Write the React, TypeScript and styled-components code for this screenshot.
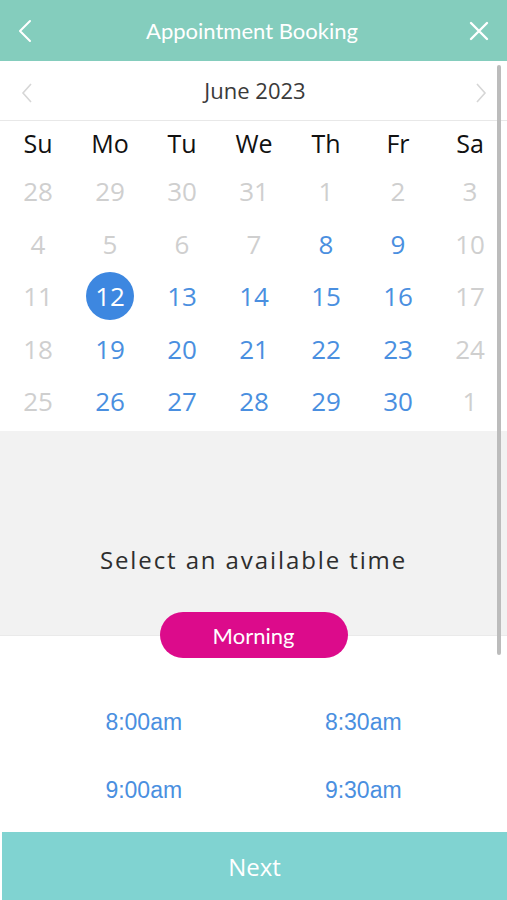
import React from "react";
import styled, { createGlobalStyle } from "styled-components";

const GlobalStyle = createGlobalStyle`
  html, body {
    margin: 0;
    padding: 0;
    background: #fff;
  }
  * {
    box-sizing: border-box;
  }
`;

type Day = {
  label: number;
  active?: boolean;
  selected?: boolean;
};

const weekDays = ["Su", "Mo", "Tu", "We", "Th", "Fr", "Sa"];

// 6월 달력, 앞뒤 달의 날짜는 비활성
const weeks: Day[][] = [
  [28, 29, 30, 31, 1, 2, 3].map((n) => ({ label: n })),
  [4, 5, 6, 7].map((n) => ({ label: n } as Day)).concat(
    [8, 9].map((n) => ({ label: n, active: true })),
    [{ label: 10 }]
  ),
  [
    { label: 11 },
    { label: 12, active: true, selected: true },
    ...[13, 14, 15, 16].map((n) => ({ label: n, active: true })),
    { label: 17 },
  ],
  [
    { label: 18 },
    ...[19, 20, 21, 22, 23].map((n) => ({ label: n, active: true })),
    { label: 24 },
  ],
  [
    { label: 25 },
    ...[26, 27, 28, 29, 30].map((n) => ({ label: n, active: true })),
    { label: 1 },
  ],
];

const times = ["8:00am", "8:30am", "9:00am", "9:30am"];

const App = () => {
  return (
    <>
      <GlobalStyle />
      <Page>
        <Header>
          <HeaderIcon>
            <svg width="14" height="24" viewBox="0 0 14 24">
              <polyline
                points="12,2 2,12 12,22"
                fill="none"
                stroke="#fff"
                strokeWidth="2"
                strokeLinecap="round"
                strokeLinejoin="round"
              />
            </svg>
          </HeaderIcon>
          <Title>Appointment Booking</Title>
          <HeaderIcon>
            <svg width="20" height="20" viewBox="0 0 20 20">
              <path
                d="M2 2 L18 18 M18 2 L2 18"
                stroke="#fff"
                strokeWidth="2.4"
                strokeLinecap="round"
              />
            </svg>
          </HeaderIcon>
        </Header>

        <MonthBar>
          <MonthArrow>
            <svg width="12" height="22" viewBox="0 0 12 22">
              <polyline
                points="10,2 2,11 10,20"
                fill="none"
                stroke="#d6d6d6"
                strokeWidth="1.6"
              />
            </svg>
          </MonthArrow>
          <MonthLabel>June 2023</MonthLabel>
          <MonthArrow>
            <svg width="12" height="22" viewBox="0 0 12 22">
              <polyline
                points="2,2 10,11 2,20"
                fill="none"
                stroke="#d6d6d6"
                strokeWidth="1.6"
              />
            </svg>
          </MonthArrow>
        </MonthBar>

        <CalendarGrid>
          {weekDays.map((d) => (
            <WeekDay key={d}>{d}</WeekDay>
          ))}
          {weeks.flat().map((day, i) => (
            <DateCell key={i}>
              <DateNum active={!!day.active} selected={!!day.selected}>
                {day.label}
              </DateNum>
            </DateCell>
          ))}
        </CalendarGrid>

        <TimeSection>
          <SectionTitle>Select an available time</SectionTitle>
          <PeriodPill>Morning</PeriodPill>
        </TimeSection>

        <TimeGrid>
          {times.map((t) => (
            <TimeSlot key={t}>{t}</TimeSlot>
          ))}
        </TimeGrid>

        <NextButton>Next</NextButton>

        <ScrollThumb />
      </Page>
    </>
  );
};

export default App;

const Page = styled.div`
  position: relative;
  width: 507px;
  height: 900px;
  display: flex;
  flex-direction: column;
  background: #fff;
  overflow: hidden;
`;

const Header = styled.div`
  height: 61px;
  background: #84cdbd;
  display: flex;
  align-items: center;
  justify-content: space-between;
  padding: 0 17px 0 14px;
`;

const HeaderIcon = styled.div`
  width: 22px;
  display: flex;
  align-items: center;
  justify-content: center;
`;

const Title = styled.div`
  font-family: "Lato", "Open Sans", sans-serif;
  font-size: 22px;
  color: #fff;
  margin-top: -1px;
`;

const MonthBar = styled.div`
  height: 60px;
  display: flex;
  align-items: center;
  justify-content: space-between;
  padding: 0 19px 0 20px;
  border-bottom: 1px solid #e8e8e8;
`;

const MonthArrow = styled.div`
  width: 14px;
  display: flex;
  align-items: center;
  justify-content: center;
  margin-top: 4px;
`;

const MonthLabel = styled.div`
  font-family: "Open Sans", sans-serif;
  font-size: 22px;
  color: #3a3a3a;
  margin-left: 2px;
  margin-top: -2px;
`;

const CalendarGrid = styled.div`
  display: grid;
  grid-template-columns: repeat(7, 72px);
  grid-auto-rows: 52.5px;
  grid-template-rows: 44px;
  padding: 0 0 0 2px;
  height: 310px;
`;

const WeekDay = styled.div`
  display: flex;
  align-items: center;
  justify-content: center;
  font-family: "Open Sans", sans-serif;
  font-size: 25px;
  color: #111;
`;

const DateCell = styled.div`
  display: flex;
  align-items: center;
  justify-content: center;
`;

const DateNum = styled.div<{ active: boolean; selected: boolean }>`
  width: 48px;
  height: 48px;
  border-radius: 50%;
  display: flex;
  align-items: center;
  justify-content: center;
  font-family: "Open Sans", sans-serif;
  font-size: 26px;
  color: ${({ active, selected }) =>
    selected ? "#fff" : active ? "#4a8fe0" : "#cfcfcf"};
  background: ${({ selected }) => (selected ? "#3d87e0" : "transparent")};
`;

const TimeSection = styled.div`
  height: 205px;
  background: #f2f2f2;
  border-bottom: 1px solid #eaeaea;
  display: flex;
  flex-direction: column;
  align-items: center;
  justify-content: flex-end;
`;

const SectionTitle = styled.div`
  font-family: "Open Sans", sans-serif;
  font-size: 24px;
  letter-spacing: 1.9px;
  color: #2e2e2e;
  line-height: 30px;
  margin-bottom: 37px;
`;

const PeriodPill = styled.div`
  position: relative;
  z-index: 1;
  width: 188px;
  height: 46px;
  margin-bottom: -23px;
  border-radius: 23px;
  background: #dc0b8b;
  color: #fff;
  font-family: "Lato", "Open Sans", sans-serif;
  font-size: 22px;
  display: flex;
  align-items: center;
  justify-content: center;
`;

const TimeGrid = styled.div`
  display: grid;
  grid-template-columns: 1fr 1fr;
  grid-auto-rows: 68px;
  padding: 0 34px;
  margin-top: 52px;
`;

const TimeSlot = styled.div`
  display: flex;
  align-items: center;
  justify-content: center;
  font-family: "Liberation Sans", Arial, sans-serif;
  font-size: 23px;
  color: #4a8fe0;
`;

const NextButton = styled.div`
  margin-top: auto;
  margin-left: 2px;
  height: 68px;
  background: #80d3d1;
  color: #fff;
  font-family: "Open Sans", sans-serif;
  font-size: 24px;
  display: flex;
  align-items: center;
  justify-content: center;
`;

const ScrollThumb = styled.div`
  position: absolute;
  top: 65px;
  right: 6px;
  width: 4px;
  height: 590px;
  background: #bcbcbc;
  border-radius: 2px;
`;
